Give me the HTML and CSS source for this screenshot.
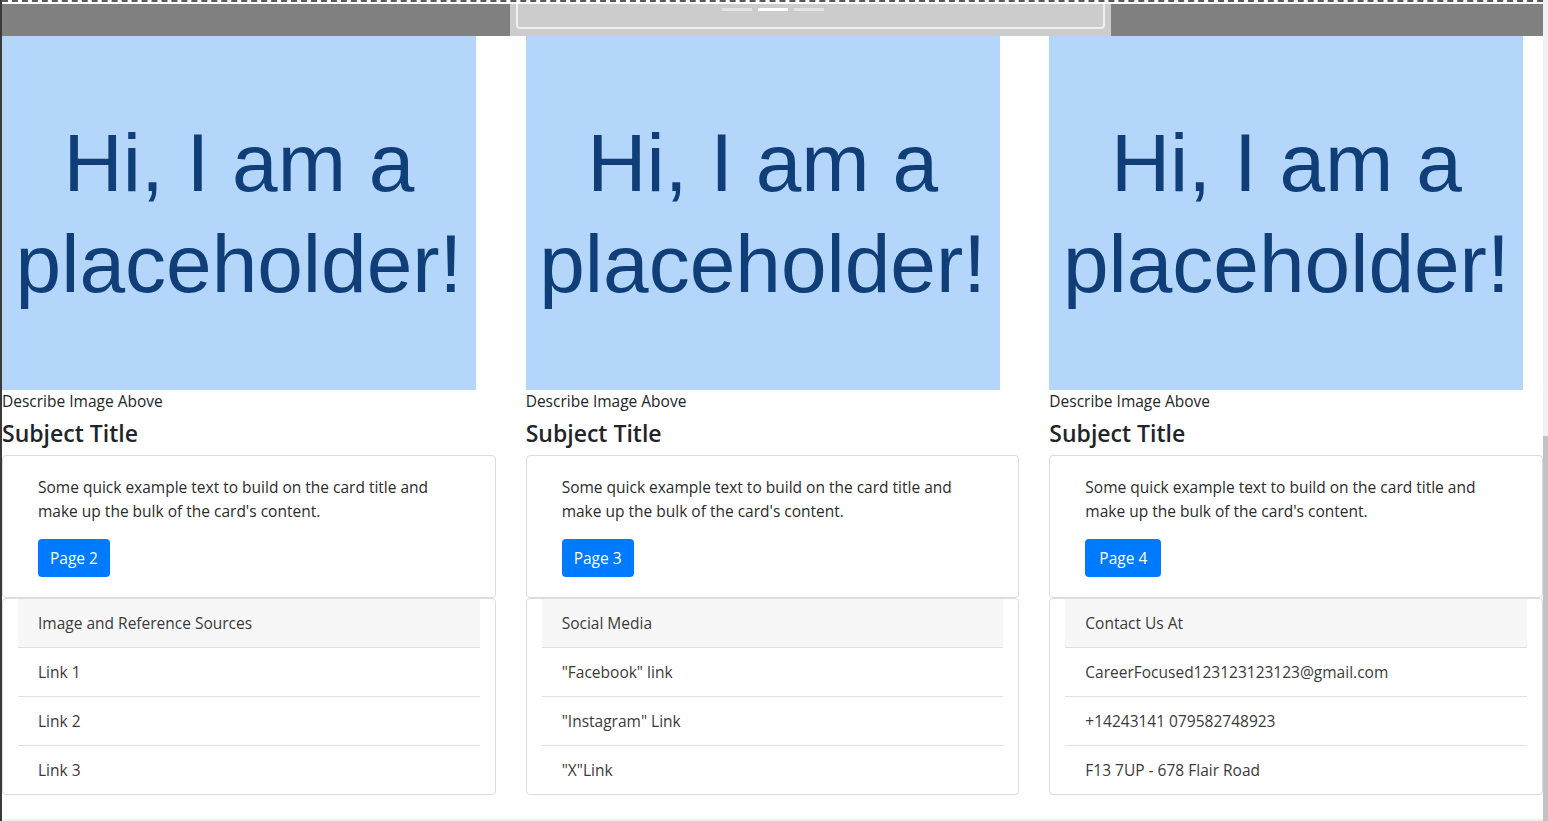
FILE: index.html
```html
<!DOCTYPE html>
<html lang="en">
<head>
<meta charset="utf-8">
<title>Cards</title>
<link rel="stylesheet" href="styles.css">
</head>
<body>
<div class="frame">
  <div class="page">
    <div class="dash"></div>
    <header class="topbar">
      <div class="side"></div>
      <div class="carousel">
        <div class="carousel-inner">
          <span class="ind"></span><span class="ind active"></span><span class="ind"></span>
        </div>
      </div>
      <div class="side"></div>
    </header>
    <main class="row">
      <section class="col">
        <div class="ph"><span>Hi, I am a<br>placeholder!</span></div>
        <div class="caption">Describe Image Above</div>
        <h4 class="title">Subject Title</h4>
        <div class="card body">
          <p>Some quick example text to build on the card title and make up the bulk of the card's content.</p>
          <a class="btn">Page 2</a>
        </div>
        <ul class="card list">
          <li class="head">Image and Reference Sources</li>
          <li>Link 1</li>
          <li>Link 2</li>
          <li>Link 3</li>
        </ul>
      </section>
      <section class="col">
        <div class="ph"><span>Hi, I am a<br>placeholder!</span></div>
        <div class="caption">Describe Image Above</div>
        <h4 class="title">Subject Title</h4>
        <div class="card body">
          <p>Some quick example text to build on the card title and make up the bulk of the card's content.</p>
          <a class="btn">Page 3</a>
        </div>
        <ul class="card list">
          <li class="head">Social Media</li>
          <li>"Facebook" link</li>
          <li>"Instagram" Link</li>
          <li>"X"Link</li>
        </ul>
      </section>
      <section class="col">
        <div class="ph"><span>Hi, I am a<br>placeholder!</span></div>
        <div class="caption">Describe Image Above</div>
        <h4 class="title">Subject Title</h4>
        <div class="card body">
          <p>Some quick example text to build on the card title and make up the bulk of the card's content.</p>
          <a class="btn wide">Page 4</a>
        </div>
        <ul class="card list">
          <li class="head">Contact Us At</li>
          <li>CareerFocused123123123123@gmail.com</li>
          <li>+14243141 079582748923</li>
          <li>F13 7UP - 678 Flair Road</li>
        </ul>
      </section>
    </main>
    <footer class="foot"></footer>
  </div>
  <div class="scrollbar"><div class="thumb"></div></div>
</div>
</body>
</html>
```

FILE: styles.css
```css
* { box-sizing: border-box; }
html, body { margin: 0; padding: 0; height: 100%; }
body {
  font-family: "Open Sans", "Noto Sans", sans-serif;
  font-size: 15.5px;
  color: #212529;
  background: #fff;
  overflow: hidden;
}
.frame {
  display: flex;
  height: 821px;
  border-left: 2px solid #3a3a3a;
}
.page { flex: 1; display: flex; flex-direction: column; }
.dash {
  height: 4px;
  border-top: 2px dashed #5a5a5a;
  background: #fff;
}
.topbar { display: flex; height: 32px; }
.side { flex: 1; background: #808080; }
.side:first-child { flex: 0 0 508px; }
.carousel {
  flex: 0 0 601px;
  background: #cccccc;
  padding: 0 6px;
}
.carousel-inner {
  height: 25px;
  border: 2px solid #efefef;
  border-top: none;
  border-radius: 0 0 4px 4px;
  display: flex;
  gap: 6px;
  padding: 4px 0 0 204px;
}
.ind { width: 30px; height: 3px; background: #e4e4e4; }
.ind.active { background: #ffffff; }
.row {
  display: grid;
  grid-template-columns: repeat(3, 1fr);
  column-gap: 30px;
}
.col { min-width: 0; }
.ph {
  width: 474px;
  height: 354px;
  background: #b4d6fa;
  color: #0f3e78;
  display: flex;
  align-items: center;
  justify-content: center;
  text-align: center;
  font-family: "Liberation Sans", Arial, sans-serif;
  font-size: 82px;
  line-height: 101px;
}
.caption {
  font-size: 15.5px;
  line-height: 22px;
  color: #212529;
}
.title {
  margin: 7px 0 7px;
  font-size: 23px;
  line-height: 29px;
  font-weight: 600;
  color: #212529;
}
.card {
  border: 1px solid #dcdcdc;
  border-radius: 4px;
  background: #fff;
}
.card.body { padding: 19px 35px 20px; }
.card.body p { margin: 0 0 16px; line-height: 24px; color: #2b2b2b; }
.btn {
  display: inline-block;
  background: #007bff;
  color: #fff;
  border-radius: 4px;
  padding: 7px 12px;
  font-size: 15.5px;
  line-height: 24px;
}
.btn.wide { padding: 7px 14px; }
.list { list-style: none; margin: 0; padding: 0 15px; color: #3a3a3a; }
.list li {
  padding: 12px 20px;
  line-height: 24px;
  border-bottom: 1px solid #dfdfdf;
}
.list li:last-child { border-bottom: none; }
.list li.head { background: #f7f7f7; }
.foot {
  margin-top: 24px;
  flex: 1;
  background: #f0f0f0;
}
.scrollbar { width: 5px; background: #f1f1f1; padding-top: 436px; }
.thumb { height: 385px; background: #c2c2c2; }
```
